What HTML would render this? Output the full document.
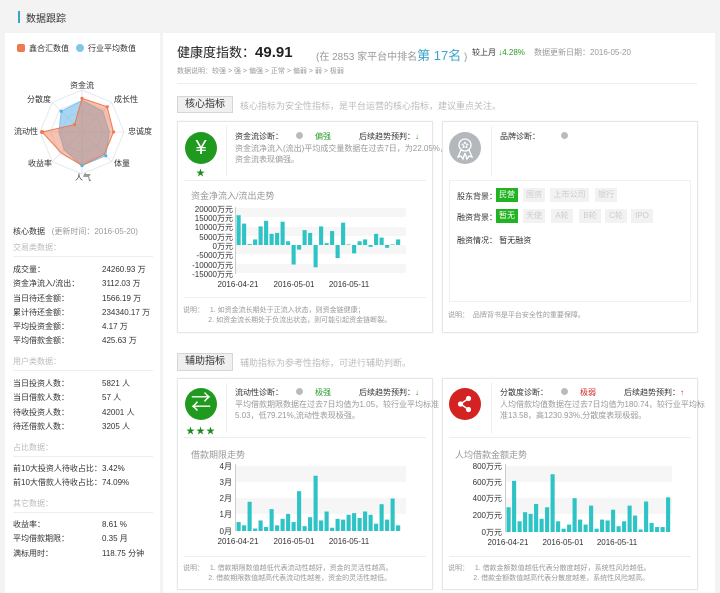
<!DOCTYPE html>
<html><head><meta charset="utf-8">
<style>
*{margin:0;padding:0;box-sizing:border-box}
body{width:720px;height:593px;overflow:hidden;background:#f3f3f3;font-family:"Liberation Sans","Noto Sans CJK SC",sans-serif;font-size:8px;color:#333;position:relative}
.a{position:absolute;white-space:nowrap}
.g{color:#999}
.lg{color:#bbb}
.card{position:absolute;background:#fff;border:1px solid #e6e6e6;box-shadow:0 0 2px rgba(0,0,0,.06)}
.tab{position:absolute;background:#f0f0f0;border:1px solid #d6d6d6;font-size:10px;text-align:center;color:#333}
.tag{position:absolute;height:14px;line-height:14px;font-size:8px;text-align:center;background:#f2f2f2;color:#ccc}
.tag.on{background:#22b322;color:#fff}
.hr{position:absolute;height:1px;background:#eee}
.ic{position:absolute;width:32px;height:32px;border-radius:50%;color:#fff;text-align:center}
.dot{position:absolute;width:7px;height:7px;border-radius:50%;background:#bbb}
</style></head><body>
<div class="a" style="left:0;top:0;width:720px;height:33px;background:#f3f3f3"></div>
<div class="a" style="left:18px;top:11px;width:2px;height:12px;background:#3aa3c9"></div>
<div class="a" style="left:26px;top:10px;font-size:10px;color:#333">数据跟踪</div>

<div class="a" style="left:5px;top:33px;width:155px;height:560px;background:#fff"></div>
<div class="a" style="left:163px;top:33px;width:552px;height:560px;background:#fff"></div>

<!-- legend -->
<div class="a" style="left:17px;top:44px;width:8px;height:8px;background:#f07a50;border-radius:2px"></div>
<div class="a" style="left:29px;top:43px">鑫合汇数值</div>
<div class="a" style="left:76px;top:44px;width:8px;height:8px;background:#7fc5ef;border-radius:50%"></div>
<div class="a" style="left:88px;top:43px">行业平均数值</div>

<!-- left data -->
<div class="a" style="left:13px;top:226px">核心数据 &nbsp;&nbsp;<span class="g">(更新时间：2016-05-20)</span></div>
<div class="a lg" style="left:13px;top:242px">交易类数据：</div>
<div class="hr" style="left:13px;top:256px;width:140px"></div>
<div class="a" style="left:13px;top:263px;line-height:14.3px">成交量：<br>资金净流入/流出：<br>当日待还金额：<br>累计待还金额：<br>平均投资金额：<br>平均借款金额：</div>
<div class="a" style="left:102px;top:263px;line-height:14.3px">24260.93 万<br>3112.03 万<br>1566.19 万<br>234340.17 万<br>4.17 万<br>425.63 万</div>
<div class="a lg" style="left:13px;top:356px">用户类数据：</div>
<div class="hr" style="left:13px;top:370px;width:140px"></div>
<div class="a" style="left:13px;top:377px;line-height:14.3px">当日投资人数：<br>当日借款人数：<br>待收投资人数：<br>待还借款人数：</div>
<div class="a" style="left:102px;top:377px;line-height:14.3px">5821 人<br>57 人<br>42001 人<br>3205 人</div>
<div class="a lg" style="left:13px;top:442px">占比数据：</div>
<div class="hr" style="left:13px;top:456px;width:140px"></div>
<div class="a" style="left:13px;top:462px;line-height:14.3px">前10大投资人待收占比：<br>前10大借款人待收占比：</div>
<div class="a" style="left:102px;top:462px;line-height:14.3px">3.42%<br>74.09%</div>
<div class="a lg" style="left:13px;top:498px">其它数据：</div>
<div class="hr" style="left:13px;top:512px;width:140px"></div>
<div class="a" style="left:13px;top:518px;line-height:14.3px">收益率：<br>平均借款期限：<br>满标用时：</div>
<div class="a" style="left:102px;top:518px;line-height:14.3px">8.61 %<br>0.35 月<br>118.75 分钟</div>

<!-- header main -->
<div class="a" style="left:177px;top:42px;font-size:13px;color:#222">健康度指数：<b style="font-size:15px">49.91</b></div>
<div class="a g" style="left:316px;top:45px;font-size:10px">(在 2853 家平台中排名<span style="color:#3aa3c9;font-size:13px">第 17名</span> )</div>
<div class="a" style="left:472px;top:47px">较上月 <span style="color:#2a9a2a">↓4.28%</span></div>
<div class="a g" style="left:534px;top:47px">数据更新日期：2016-05-20</div>
<div class="a g" style="left:177px;top:66px;font-size:7px">数据说明：较强 &gt; 强 &gt; 偏强 &gt; 正常 &gt; 偏弱 &gt; 弱 &gt; 极弱</div>
<div class="hr" style="left:177px;top:83px;width:520px"></div>

<div class="tab" style="left:177px;top:96px;width:56px;height:17px;line-height:15px">核心指标</div>
<div class="a lg" style="left:240px;top:99px;font-size:9px">核心指标为安全性指标，是平台运营的核心指标，建议重点关注。</div>

<!-- card1 -->
<div class="card" style="left:177px;top:121px;width:256px;height:212px"></div>
<div class="ic" style="left:185px;top:132px;background:#1f9a1f;font-size:20px;line-height:32px">¥</div>
<div class="a" style="left:196px;top:166px;color:#1f8a1f;font-size:9px">★</div>
<div class="a" style="left:226px;top:126px;width:1px;height:50px;background:#eee"></div>
<div class="a" style="left:235px;top:131px">资金流诊断：</div>
<div class="dot" style="left:296px;top:132px"></div>
<div class="a" style="left:315px;top:131px;color:#2a9a2a">偏强</div>
<div class="a" style="left:359px;top:131px">后续趋势预判：<span style="color:#2a9a2a">↓</span></div>
<div class="a g" style="left:235px;top:143px;line-height:11px">资金流净流入(流出)平均成交量数据在过去7日，为22.05%，<br>资金流表现偏强。</div>
<div class="hr" style="left:184px;top:180px;width:242px"></div>
<div class="a g" style="left:191px;top:189px;font-size:9px">资金净流入/流出走势</div>
<div class="hr" style="left:184px;top:297px;width:242px"></div>
<div class="a g" style="left:183px;top:306px;line-height:10px;font-size:7px">说明：&nbsp;&nbsp;&nbsp;1. 如资金流长期处于正流入状态，则资金链健康；<br>&nbsp;&nbsp;&nbsp;&nbsp;&nbsp;&nbsp;&nbsp;&nbsp;&nbsp;&nbsp;&nbsp;&nbsp;&nbsp;2. 如资金流长期处于负流出状态，则可能引起资金链断裂。</div>

<!-- card2 -->
<div class="card" style="left:442px;top:121px;width:256px;height:212px"></div>
<div class="ic" style="left:449px;top:132px;background:#b4b8bd">
<svg width="32" height="32" viewBox="0 0 32 32" fill="none" stroke="#fff" stroke-width="1.3"><circle cx="16" cy="13" r="6"/><path d="M12 18l-3 7 3-1 2 3 2-6M20 18l3 7-3-1-2 3-2-6"/><path d="M16 10l1 2 2 .3-1.5 1.4.4 2-1.9-1-1.9 1 .4-2-1.5-1.4 2-.3z" stroke-width="0.9"/></svg></div>
<div class="a" style="left:491px;top:126px;width:1px;height:50px;background:#eee"></div>
<div class="a" style="left:500px;top:131px">品牌诊断：</div>
<div class="dot" style="left:561px;top:132px"></div>
<div class="a" style="left:449px;top:180px;width:242px;height:122px;border:1px solid #f0f0f0"></div>
<div class="a" style="left:457px;top:191px">股东背景：</div>
<div class="tag on" style="left:496px;top:188px;width:22px">民营</div>
<div class="tag" style="left:523px;top:188px;width:22px">国资</div>
<div class="tag" style="left:550px;top:188px;width:39px">上市公司</div>
<div class="tag" style="left:595px;top:188px;width:22px">银行</div>
<div class="a" style="left:457px;top:212px">融资背景：</div>
<div class="tag on" style="left:496px;top:209px;width:22px">暂无</div>
<div class="tag" style="left:523px;top:209px;width:22px">天使</div>
<div class="tag" style="left:551px;top:209px;width:22px">A轮</div>
<div class="tag" style="left:579px;top:209px;width:22px">B轮</div>
<div class="tag" style="left:605px;top:209px;width:22px">C轮</div>
<div class="tag" style="left:631px;top:209px;width:22px">IPO</div>
<div class="a" style="left:457px;top:235px">融资情况：&nbsp;暂无融资</div>
<div class="a g" style="left:448px;top:310px;font-size:7px">说明：&nbsp;&nbsp;品牌背书是平台安全性的重要保障。</div>

<!-- section 2 -->
<div class="tab" style="left:177px;top:353px;width:56px;height:18px;line-height:16px">辅助指标</div>
<div class="a lg" style="left:240px;top:356px;font-size:9px">辅助指标为参考性指标，可进行辅助判断。</div>

<!-- card3 -->
<div class="card" style="left:177px;top:378px;width:256px;height:212px"></div>
<div class="ic" style="left:185px;top:388px;background:#1f9a1f;font-size:20px;line-height:31px">⇄</div>
<div class="a" style="left:186px;top:424px;color:#1f8a1f;font-size:9px;letter-spacing:1px">★★★</div>
<div class="a" style="left:226px;top:383px;width:1px;height:50px;background:#eee"></div>
<div class="a" style="left:235px;top:387px">流动性诊断：</div>
<div class="dot" style="left:296px;top:388px"></div>
<div class="a" style="left:315px;top:387px;color:#2a9a2a">极强</div>
<div class="a" style="left:359px;top:387px">后续趋势预判：<span style="color:#2a9a2a">↓</span></div>
<div class="a g" style="left:235px;top:399px;line-height:11px">平均借款期限数据在过去7日均值为1.05，较行业平均标准<br>5.03，低79.21%,流动性表现极强。</div>
<div class="hr" style="left:184px;top:437px;width:242px"></div>
<div class="a g" style="left:191px;top:448px;font-size:9px">借款期限走势</div>
<div class="hr" style="left:184px;top:556px;width:242px"></div>
<div class="a g" style="left:183px;top:564px;line-height:10px;font-size:7px">说明：&nbsp;&nbsp;&nbsp;1. 借款期限数值越低代表流动性越好，资金的灵活性越高。<br>&nbsp;&nbsp;&nbsp;&nbsp;&nbsp;&nbsp;&nbsp;&nbsp;&nbsp;&nbsp;&nbsp;&nbsp;&nbsp;2. 借款期限数值越高代表流动性越差，资金的灵活性越低。</div>

<!-- card4 -->
<div class="card" style="left:442px;top:378px;width:256px;height:212px"></div>
<div class="ic" style="left:449px;top:388px;background:#d42222">
<svg width="32" height="32" viewBox="0 0 32 32"><g fill="#fff"><circle cx="19.5" cy="10.5" r="2.6"/><circle cx="11.5" cy="16" r="2.6"/><circle cx="19.5" cy="21.5" r="2.6"/></g><path d="M19.5 10.5L11.5 16L19.5 21.5" stroke="#fff" stroke-width="1.5" fill="none"/></svg></div>
<div class="a" style="left:491px;top:383px;width:1px;height:50px;background:#eee"></div>
<div class="a" style="left:500px;top:387px">分散度诊断：</div>
<div class="dot" style="left:561px;top:388px"></div>
<div class="a" style="left:580px;top:387px;color:#d42222">极弱</div>
<div class="a" style="left:624px;top:387px">后续趋势预判：<span style="color:#d42222">↑</span></div>
<div class="a g" style="left:500px;top:399px;line-height:11px">人均借款均值数据在过去7日均值为180.74，较行业平均标<br>准13.58，高1230.93%,分散度表现极弱。</div>
<div class="hr" style="left:449px;top:437px;width:242px"></div>
<div class="a g" style="left:455px;top:448px;font-size:9px">人均借款金额走势</div>
<div class="hr" style="left:449px;top:556px;width:242px"></div>
<div class="a g" style="left:448px;top:564px;line-height:10px;font-size:7px">说明：&nbsp;&nbsp;&nbsp;1. 借款金额数值越低代表分散度越好，系统性风险越低。<br>&nbsp;&nbsp;&nbsp;&nbsp;&nbsp;&nbsp;&nbsp;&nbsp;&nbsp;&nbsp;&nbsp;&nbsp;&nbsp;2. 借款金额数值越高代表分散度越差，系统性风险越高。</div>

<svg class="a" style="left:0;top:0;z-index:5" width="720" height="593">
<g fill="none" stroke="#e3e9f2" stroke-width="1">
<polygon points="82,90 111.7,102.3 124,132 111.7,161.7 82,174 52.3,161.7 40,132 52.3,102.3"/>
<polygon points="82,100.5 104.3,109.7 113.5,132 104.3,154.3 82,163.5 59.7,154.3 50.5,132 59.7,109.7"/>
<polygon points="82,111 96.8,117.2 103,132 96.8,146.8 82,153 67.2,146.8 61,132 67.2,117.2"/>
<line x1="82" y1="90" x2="82" y2="174"/><line x1="40" y1="132" x2="124" y2="132"/>
<line x1="52.3" y1="102.3" x2="111.7" y2="161.7"/><line x1="111.7" y1="102.3" x2="52.3" y2="161.7"/>
</g>
<polygon points="82,100.5 102.8,111.2 109.3,132 105.8,155.8 82,165.6 64.2,149.8 58.9,132 61.2,111.2" fill="rgba(120,190,235,.65)" stroke="#7fc5ef"/>
<polygon points="82,98.4 107.2,106.8 113.5,132 104.3,154.3 82,165.6 61.2,152.8 42.1,132 74.6,124.6" fill="rgba(240,120,80,.45)" stroke="#f07a50"/>
<g fill="#f07a50"><circle cx="42.1" cy="132" r="2"/><circle cx="74.6" cy="124.6" r="1.6"/><circle cx="82" cy="98.4" r="1.6"/><circle cx="107.2" cy="106.8" r="1.6"/><circle cx="113.5" cy="132" r="1.6"/></g>
<g fill="#5aaee0"><circle cx="61.2" cy="111.2" r="1.6"/><circle cx="105.8" cy="155.8" r="1.6"/><circle cx="82" cy="165.6" r="1.6"/></g>
<g font-size="8" fill="#333" font-family="Liberation Sans,Noto Sans CJK SC,sans-serif">
<text x="70" y="88">资金流</text><text x="114" y="102">成长性</text><text x="128" y="134">忠诚度</text><text x="114" y="166">体量</text>
<text x="75" y="180">人气</text><text x="28" y="166">收益率</text><text x="14" y="134">流动性</text><text x="27" y="102">分散度</text>
</g>

<g fill="#f6f6f6"><rect x="236" y="208" width="170" height="9"/><rect x="236" y="227" width="170" height="9"/><rect x="236" y="245" width="170" height="9"/><rect x="236" y="264" width="170" height="9"/></g>
<line x1="235.5" y1="207" x2="235.5" y2="274" stroke="#ccc"/>
<g transform="translate(236,245) scale(5.5,-0.00186)" fill="#2ec4c6">
<rect x="0.1" y="0" width="0.75" height="16000"/><rect x="1.1" y="0" width="0.75" height="11500"/><rect x="2.1" y="0" width="0.75" height="500"/><rect x="3.1" y="0" width="0.75" height="3000"/><rect x="4.1" y="0" width="0.75" height="10000"/><rect x="5.1" y="0" width="0.75" height="13000"/><rect x="6.1" y="0" width="0.75" height="6000"/><rect x="7.1" y="0" width="0.75" height="6500"/><rect x="8.1" y="0" width="0.75" height="12500"/><rect x="9.1" y="0" width="0.75" height="2000"/><rect x="10.1" y="-10500" width="0.75" height="10500"/><rect x="11.1" y="-2500" width="0.75" height="2500"/><rect x="12.1" y="0" width="0.75" height="8000"/><rect x="13.1" y="0" width="0.75" height="6500"/><rect x="14.1" y="-12000" width="0.75" height="12000"/><rect x="15.1" y="0" width="0.75" height="10000"/><rect x="16.1" y="0" width="0.75" height="1000"/><rect x="17.1" y="0" width="0.75" height="7500"/><rect x="18.1" y="-7000" width="0.75" height="7000"/><rect x="19.1" y="0" width="0.75" height="12000"/><rect x="20.1" y="0" width="0.75" height="300"/><rect x="21.1" y="-4500" width="0.75" height="4500"/><rect x="22.1" y="0" width="0.75" height="2000"/><rect x="23.1" y="0" width="0.75" height="3000"/><rect x="24.1" y="-1000" width="0.75" height="1000"/><rect x="25.1" y="0" width="0.75" height="6000"/><rect x="26.1" y="0" width="0.75" height="4000"/><rect x="27.1" y="-1500" width="0.75" height="1500"/><rect x="28.1" y="0" width="0.75" height="300"/><rect x="29.1" y="0" width="0.75" height="3000"/>
</g>
<g font-size="8" fill="#333" text-anchor="end" font-family="Liberation Sans,Noto Sans CJK SC,sans-serif">
<text x="233" y="212">20000万元</text><text x="233" y="221">15000万元</text><text x="233" y="230">10000万元</text><text x="233" y="240">5000万元</text><text x="233" y="249">0万元</text><text x="233" y="258">-5000万元</text><text x="233" y="268">-10000万元</text><text x="233" y="277">-15000万元</text>
</g>
<g font-size="8" fill="#333" text-anchor="middle" font-family="Liberation Sans,sans-serif">
<text x="238" y="287">2016-04-21</text><text x="294" y="287">2016-05-01</text><text x="349" y="287">2016-05-11</text>
</g>

<g fill="#f6f6f6"><rect x="236" y="466" width="170" height="16"/><rect x="236" y="498" width="170" height="16"/></g>
<line x1="235.5" y1="464" x2="235.5" y2="531" stroke="#ccc"/>
<g transform="translate(236,531) scale(5.5,-16.25)" fill="#2ec4c6">
<rect x="0.1" y="0" width="0.75" height="0.55"/><rect x="1.1" y="0" width="0.75" height="0.35"/><rect x="2.1" y="0" width="0.75" height="1.8"/><rect x="3.1" y="0" width="0.75" height="0.15"/><rect x="4.1" y="0" width="0.75" height="0.65"/><rect x="5.1" y="0" width="0.75" height="0.25"/><rect x="6.1" y="0" width="0.75" height="1.35"/><rect x="7.1" y="0" width="0.75" height="0.35"/><rect x="8.1" y="0" width="0.75" height="0.75"/><rect x="9.1" y="0" width="0.75" height="1.05"/><rect x="10.1" y="0" width="0.75" height="0.55"/><rect x="11.1" y="0" width="0.75" height="2.45"/><rect x="12.1" y="0" width="0.75" height="0.3"/><rect x="13.1" y="0" width="0.75" height="0.85"/><rect x="14.1" y="0" width="0.75" height="3.4"/><rect x="15.1" y="0" width="0.75" height="0.65"/><rect x="16.1" y="0" width="0.75" height="1.2"/><rect x="17.1" y="0" width="0.75" height="0.2"/><rect x="18.1" y="0" width="0.75" height="0.75"/><rect x="19.1" y="0" width="0.75" height="0.7"/><rect x="20.1" y="0" width="0.75" height="1.0"/><rect x="21.1" y="0" width="0.75" height="1.1"/><rect x="22.1" y="0" width="0.75" height="0.8"/><rect x="23.1" y="0" width="0.75" height="1.2"/><rect x="24.1" y="0" width="0.75" height="1.0"/><rect x="25.1" y="0" width="0.75" height="0.45"/><rect x="26.1" y="0" width="0.75" height="1.65"/><rect x="27.1" y="0" width="0.75" height="0.7"/><rect x="28.1" y="0" width="0.75" height="2.0"/><rect x="29.1" y="0" width="0.75" height="0.35"/>
</g>
<g font-size="8" fill="#333" text-anchor="end" font-family="Liberation Sans,Noto Sans CJK SC,sans-serif">
<text x="232" y="469">4月</text><text x="232" y="485">3月</text><text x="232" y="501">2月</text><text x="232" y="517">1月</text><text x="232" y="534">0月</text>
</g>
<g font-size="8" fill="#333" text-anchor="middle" font-family="Liberation Sans,sans-serif">
<text x="238" y="544">2016-04-21</text><text x="294" y="544">2016-05-01</text><text x="349" y="544">2016-05-11</text>
</g>

<g fill="#f6f6f6"><rect x="506" y="466" width="166" height="16"/><rect x="506" y="498" width="166" height="16"/></g>
<line x1="505.5" y1="464" x2="505.5" y2="532" stroke="#ccc"/>
<g transform="translate(506,532) scale(5.5,-0.0825)" fill="#2ec4c6">
<rect x="0.1" y="0" width="0.75" height="300"/><rect x="1.1" y="0" width="0.75" height="620"/><rect x="2.1" y="0" width="0.75" height="130"/><rect x="3.1" y="0" width="0.75" height="240"/><rect x="4.1" y="0" width="0.75" height="220"/><rect x="5.1" y="0" width="0.75" height="340"/><rect x="6.1" y="0" width="0.75" height="160"/><rect x="7.1" y="0" width="0.75" height="300"/><rect x="8.1" y="0" width="0.75" height="700"/><rect x="9.1" y="0" width="0.75" height="130"/><rect x="10.1" y="0" width="0.75" height="40"/><rect x="11.1" y="0" width="0.75" height="90"/><rect x="12.1" y="0" width="0.75" height="410"/><rect x="13.1" y="0" width="0.75" height="150"/><rect x="14.1" y="0" width="0.75" height="90"/><rect x="15.1" y="0" width="0.75" height="320"/><rect x="16.1" y="0" width="0.75" height="40"/><rect x="17.1" y="0" width="0.75" height="150"/><rect x="18.1" y="0" width="0.75" height="140"/><rect x="19.1" y="0" width="0.75" height="270"/><rect x="20.1" y="0" width="0.75" height="70"/><rect x="21.1" y="0" width="0.75" height="130"/><rect x="22.1" y="0" width="0.75" height="320"/><rect x="23.1" y="0" width="0.75" height="200"/><rect x="24.1" y="0" width="0.75" height="30"/><rect x="25.1" y="0" width="0.75" height="370"/><rect x="26.1" y="0" width="0.75" height="110"/><rect x="27.1" y="0" width="0.75" height="60"/><rect x="28.1" y="0" width="0.75" height="60"/><rect x="29.1" y="0" width="0.75" height="420"/>
</g>
<g font-size="8" fill="#333" text-anchor="end" font-family="Liberation Sans,Noto Sans CJK SC,sans-serif">
<text x="502" y="469">800万元</text><text x="502" y="485">600万元</text><text x="502" y="501">400万元</text><text x="502" y="518">200万元</text><text x="502" y="535">0万元</text>
</g>
<g font-size="8" fill="#333" text-anchor="middle" font-family="Liberation Sans,sans-serif">
<text x="508" y="545">2016-04-21</text><text x="563" y="545">2016-05-01</text><text x="617" y="545">2016-05-11</text>
</g>
</svg>
</body></html>
